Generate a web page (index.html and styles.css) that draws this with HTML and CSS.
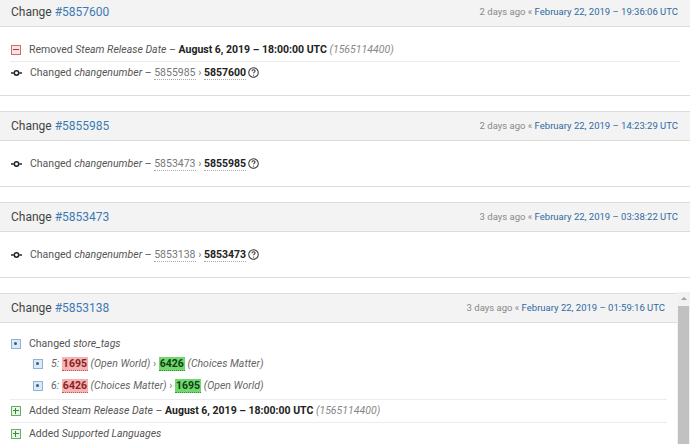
FILE: index.html
```html
<!DOCTYPE html>
<html lang="en">
<head>
	<meta charset="UTF-8">
	<title>History</title>
	<link rel="stylesheet" href="styles.css">
</head>
<body>
<section class="feed">
	<div class="card">
		<div class="card-head">
			<span class="title">Change <a href="javascript:;">#5857600</a></span>
			<span class="when">2 days ago « <a href="javascript:;">February 22, 2019 – 19:36:06 UTC</a></span>
		</div>
		<ul class="rows">
			<li>
				<i class="ico ico-removed"></i>
				<span>Removed <em>Steam Release Date</em> – <b>August 6, 2019 – 18:00:00 UTC</b> <em class="muted">(1565114400)</em></span>
			</li>
			<li>
				<svg class="ico-commit" viewBox="0 0 12 8"><line x1="0" y1="4" x2="3" y2="4"/><circle cx="6" cy="4" r="2.4"/><line x1="9" y1="4" x2="12" y2="4"/></svg>
				<span>Changed <em>changenumber</em> – <span class="old">5855985</span> <span class="sep">›</span> <b class="new">5857600</b><svg class="ico-help" viewBox="0 0 12 12"><circle cx="6" cy="6" r="5.2"/><path d="M4.3 4.6 C4.3 3.5 5.1 3 6 3 C7 3 7.7 3.6 7.7 4.4 C7.7 5.5 6.1 5.6 6.1 6.9"/><circle class="dot" cx="6.1" cy="8.8" r="0.7"/></svg></span>
			</li>
		</ul>
	</div>

	<div class="card">
		<div class="card-head">
			<span class="title">Change <a href="javascript:;">#5855985</a></span>
			<span class="when">2 days ago « <a href="javascript:;">February 22, 2019 – 14:23:29 UTC</a></span>
		</div>
		<ul class="rows">
			<li>
				<svg class="ico-commit" viewBox="0 0 12 8"><line x1="0" y1="4" x2="3" y2="4"/><circle cx="6" cy="4" r="2.4"/><line x1="9" y1="4" x2="12" y2="4"/></svg>
				<span>Changed <em>changenumber</em> – <span class="old">5853473</span> <span class="sep">›</span> <b class="new">5855985</b><svg class="ico-help" viewBox="0 0 12 12"><circle cx="6" cy="6" r="5.2"/><path d="M4.3 4.6 C4.3 3.5 5.1 3 6 3 C7 3 7.7 3.6 7.7 4.4 C7.7 5.5 6.1 5.6 6.1 6.9"/><circle class="dot" cx="6.1" cy="8.8" r="0.7"/></svg></span>
			</li>
		</ul>
	</div>

	<div class="card">
		<div class="card-head">
			<span class="title">Change <a href="javascript:;">#5853473</a></span>
			<span class="when">3 days ago « <a href="javascript:;">February 22, 2019 – 03:38:22 UTC</a></span>
		</div>
		<ul class="rows">
			<li>
				<svg class="ico-commit" viewBox="0 0 12 8"><line x1="0" y1="4" x2="3" y2="4"/><circle cx="6" cy="4" r="2.4"/><line x1="9" y1="4" x2="12" y2="4"/></svg>
				<span>Changed <em>changenumber</em> – <span class="old">5853138</span> <span class="sep">›</span> <b class="new">5853473</b><svg class="ico-help" viewBox="0 0 12 12"><circle cx="6" cy="6" r="5.2"/><path d="M4.3 4.6 C4.3 3.5 5.1 3 6 3 C7 3 7.7 3.6 7.7 4.4 C7.7 5.5 6.1 5.6 6.1 6.9"/><circle class="dot" cx="6.1" cy="8.8" r="0.7"/></svg></span>
			</li>
		</ul>
	</div>

	<div class="card card-scroll">
		<div class="card-head">
			<span class="title">Change <a href="javascript:;">#5853138</a></span>
			<span class="when">3 days ago « <a href="javascript:;">February 22, 2019 – 01:59:16 UTC</a></span>
		</div>
		<ul class="rows">
			<li class="group">
				<div class="group-head">
					<i class="ico ico-changed"></i>
					<span>Changed <em>store_tags</em></span>
				</div>
				<ul class="sub">
					<li>
						<i class="ico ico-changed"></i>
						<span><em>5:</em> <b class="del">1695</b> <em>(Open World)</em> <span class="sep">›</span> <b class="ins">6426</b> <em>(Choices Matter)</em></span>
					</li>
					<li>
						<i class="ico ico-changed"></i>
						<span><em>6:</em> <b class="del">6426</b> <em>(Choices Matter)</em> <span class="sep">›</span> <b class="ins">1695</b> <em>(Open World)</em></span>
					</li>
				</ul>
			</li>
			<li>
				<i class="ico ico-added"></i>
				<span>Added <em>Steam Release Date</em> – <b>August 6, 2019 – 18:00:00 UTC</b> <em class="muted">(1565114400)</em></span>
			</li>
			<li class="last">
				<i class="ico ico-added"></i>
				<span>Added <em>Supported Languages</em></span>
			</li>
		</ul>
	</div>
</section>
<div class="scrollbar">
	<span class="arrow"></span>
	<span class="thumb"></span>
</div>
</body>
</html>
```

FILE: styles.css
```css
body, ul, li {
	margin: 0;
	padding: 0;
}

html, body {
	width: 100%;
	height: 100%;
	font: 10.5px/1.5 Roboto, "Liberation Sans", Arial, sans-serif;
	color: #555;
	background: #fff;
	overflow: hidden;
}
ul { list-style: none; }
a { text-decoration: none; color: #3b74aa; }
em { font-style: italic; }
b { font-weight: bold; color: #222; }

.feed {
	margin-top: -3px;
}

/* 卡片 */
.card {
	border-top: 1px solid #dcdcdc;
	border-bottom: 1px solid #dcdcdc;
	margin-bottom: 15px;
	background: #fff;
}
.card-scroll {
	margin-right: 13px;
}
.card-head {
	height: 28px;
	padding: 0 12px 0 11px;
	background: #f3f3f3;
	border-bottom: 1px solid #dcdcdc;
	display: flex;
	justify-content: space-between;
	align-items: center;
}
.title {
	font-size: 12px;
	color: #444;
}
.title a { color: #3d7ab3; }
.when {
	font-size: 9.5px;
	color: #888;
}
.when a { color: #2f6a9f; }

/* 行 */
.rows {
	padding: 12px 10px 11px 10px;
}
.rows > li {
	min-height: 22px;
	display: flex;
	align-items: center;
	gap: 8px;
	padding-left: 1px;
}
.rows > li + li {
	border-top: 1px solid #ececec;
}
.rows > li.group {
	display: block;
	padding-bottom: 2px;
}
.group-head {
	height: 18px;
	display: flex;
	align-items: center;
	gap: 8px;
}
.sub li {
	height: 22px;
	display: flex;
	align-items: center;
	gap: 8px;
	padding-left: 22px;
}
.sub em { color: #666; }
.rows > li.last {
	position: relative;
}
.rows > li.last:after {
	content: '';
	position: absolute;
	left: 0;
	right: 0;
	bottom: -1px;
	height: 1px;
	background: #8fdc8f;
}

.muted { color: #888; }
.sep { color: #777; }
.old {
	color: #777;
	border-bottom: 1px dotted #aaa;
}
.new {
	color: #222;
	border-bottom: 1px dotted #aaa;
}
.del, .ins {
	padding: 0 1px;
	border-bottom: 1px dotted #b55;
}
.del {
	background: #f5b3b3;
	color: #8a1f1f;
}
.ins {
	background: #6fd86f;
	color: #123d12;
	border-bottom-color: #3a8a3a;
}

/* 图标 */
.ico {
	width: 8px;
	height: 8px;
	flex: none;
	position: relative;
	border: 1px solid;
}
.ico-removed {
	border-color: #d46a6a;
	background: #fbe3e3;
}
.ico-removed:before {
	content: '';
	position: absolute;
	left: 1px;
	right: 1px;
	top: 3px;
	height: 1px;
	background: #b03a3a;
}
.ico-added {
	border-color: #6aaa6a;
	background: #e6f5e6;
}
.ico-added:before, .ico-added:after {
	content: '';
	position: absolute;
	background: #3a8a3a;
}
.ico-added:before {
	left: 1px;
	right: 1px;
	top: 3px;
	height: 1px;
}
.ico-added:after {
	top: 1px;
	bottom: 1px;
	left: 3px;
	width: 1px;
}
.ico-changed {
	border-color: #8fb3d6;
	background: #dde9f5;
}
.ico-changed:before {
	content: '';
	position: absolute;
	left: 2px;
	top: 2px;
	width: 3px;
	height: 3px;
	border-radius: 50%;
	background: #2f5f8f;
}
.ico-commit {
	width: 11px;
	height: 8px;
	flex: none;
	fill: none;
	stroke: #222;
	stroke-width: 1.6;
}
.ico-help {
	width: 11px;
	height: 11px;
	margin-left: 2px;
	vertical-align: -2px;
	fill: none;
	stroke: #333;
	stroke-width: 1.1;
}
.ico-help .dot {
	fill: #333;
	stroke: none;
}

/* 滚动条 */
.scrollbar {
	position: absolute;
	top: 292px;
	right: 0;
	bottom: 0;
	width: 13px;
	background: #f1f1f1;
}
.scrollbar .arrow {
	position: absolute;
	top: 5px;
	left: 4px;
	border-left: 3px solid transparent;
	border-right: 3px solid transparent;
	border-bottom: 3px solid #a3a3a3;
}
.scrollbar .thumb {
	position: absolute;
	top: 14px;
	left: 1px;
	right: 1px;
	bottom: 0;
	background: #c1c1c1;
}
```
